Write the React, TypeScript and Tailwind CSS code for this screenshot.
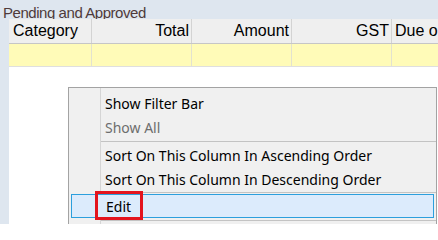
import React from "react";

const cols = [
  { label: "Category", w: "w-[83px]", align: "justify-start pl-[4px]" },
  { label: "Total", w: "w-[100px]", align: "justify-end pr-[2px]" },
  { label: "Amount", w: "w-[100px]", align: "justify-end pr-[2px]" },
  { label: "GST", w: "w-[100px]", align: "justify-end pr-[2px]" },
  { label: "Due on", w: "w-[100px]", align: "justify-start pl-[3px]" },
];

export default function App() {
  return (
    <div className="relative w-[438px] h-[224px] overflow-hidden bg-[#dee6ef] flex flex-col">
      <div
        className="h-[19px] overflow-hidden pl-[3px] text-[15px] leading-[26px] tracking-[-0.45px] text-[#4f3a3a] whitespace-nowrap"
        style={{ fontFamily: '"Liberation Sans", Arial, sans-serif' }}
      >
        Pending and Approved
      </div>
      <div
        className="ml-[9px] flex-1 bg-white flex flex-col"
        style={{ fontFamily: '"Liberation Sans", Arial, sans-serif' }}
      >
        <div className="flex h-[25px] bg-[#efefef] border-b border-[#c6c6c6] whitespace-nowrap">
          {cols.map((c) => (
            <div
              key={c.label}
              className={`${c.w} shrink-0 flex items-center ${c.align} border-r border-[#d3d3d3] text-[16px] text-black overflow-hidden`}
            >
              {c.label}
            </div>
          ))}
        </div>
        <div className="flex h-[23px] bg-[#fffbb8] border-b border-[#dfdfdf]">
          {cols.map((c) => (
            <div key={c.label} className={`${c.w} shrink-0 border-r border-[#e2e2d0]`} />
          ))}
        </div>
      </div>

      <div
        className="absolute left-[68px] top-[87px] w-[369px] h-[160px] bg-[#f0f0f0] border border-[#a3a3a3] pt-[3px] flex flex-col text-[14px] text-black"
        style={{ fontFamily: '"Noto Sans", "Segoe UI", sans-serif' }}
      >
        <div className="absolute left-[31px] top-0 bottom-0 w-px bg-[#d5d5d5]" />
        <div className="relative h-[24px] flex items-center pl-[36px]">Show Filter Bar</div>
        <div className="relative h-[24px] flex items-center pl-[36px] text-[#6d6d6d]">Show All</div>
        <div className="relative h-[4px] ml-[32px] flex items-center">
          <div className="w-full h-px bg-[#c3c3c3]" />
        </div>
        <div className="relative h-[24px] flex items-center pl-[36px]">
          Sort On This Column In Ascending Order
        </div>
        <div className="relative h-[24px] flex items-center pl-[36px]">
          Sort On This Column In Descending Order
        </div>
        <div className="relative h-[3px] ml-[32px] flex items-center">
          <div className="w-full h-px bg-[#c3c3c3]" />
        </div>
        <div className="relative mx-[2px] h-[24px] flex items-center pl-[34px] bg-[#dcebfc] border border-[#2c9fdd]">
          Edit
        </div>
        <div className="relative h-[5px] ml-[32px] flex items-center">
          <div className="w-full h-px bg-[#c3c3c3]" />
        </div>
      </div>

      <div className="absolute left-[95px] top-[191px] w-[48px] h-[29px] border-[3px] border-[#e3141e]" />
    </div>
  );
}
